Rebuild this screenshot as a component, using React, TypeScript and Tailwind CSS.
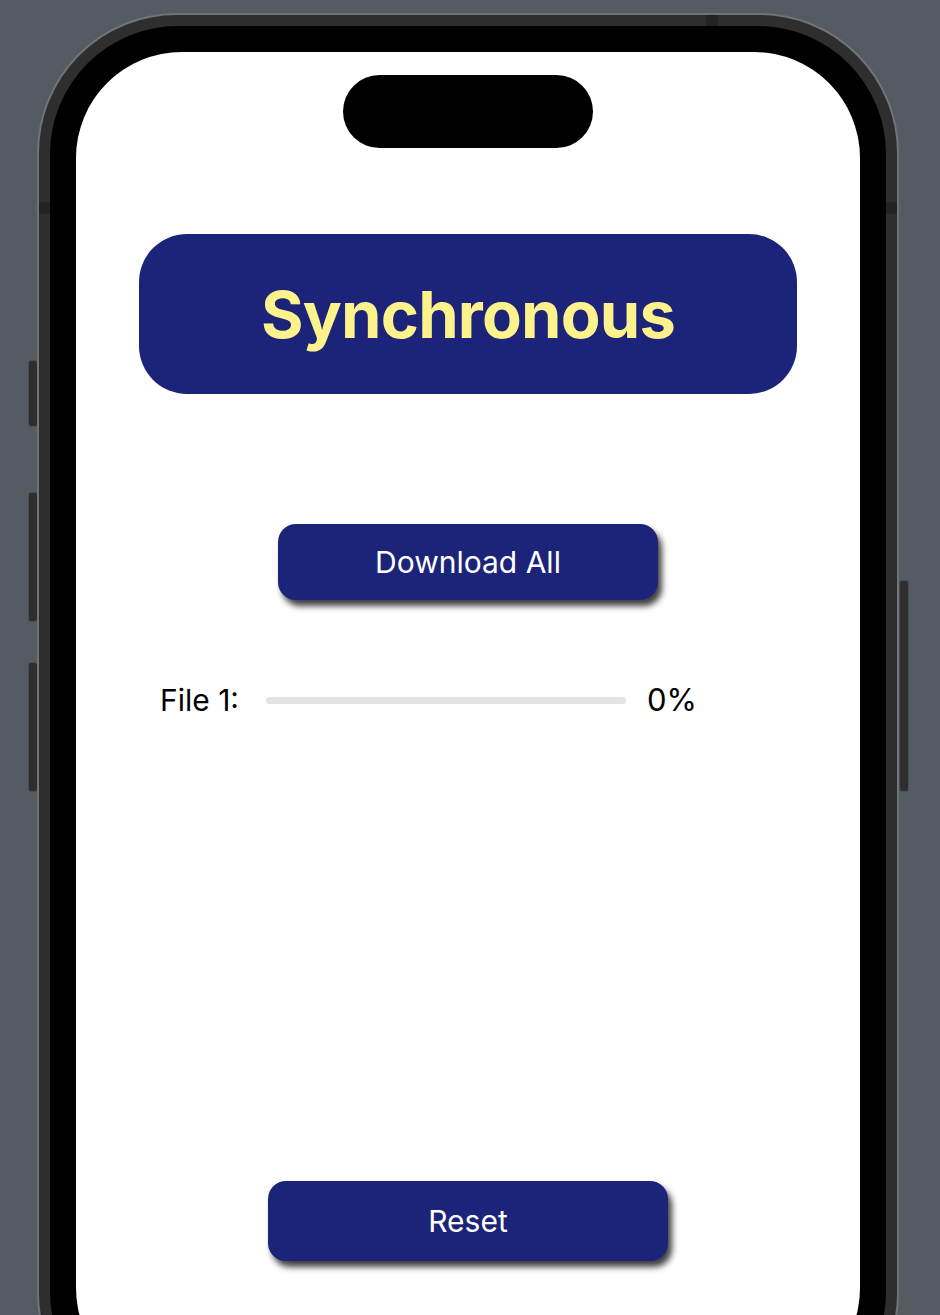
import React from 'react'

// Phone mockup showing a "Synchronous" download demo screen.

const navy = 'bg-[#1c2479]'

function SideButton({ className }: { className: string }) {
  return <div className={`absolute w-[10px] rounded-[3px] bg-[#2e2e2e] border border-[#4a4e55] ${className}`} />
}

export default function App() {
  const progress = 0

  return (
    <div
      className="relative w-[940px] h-[1315px] overflow-hidden bg-[#555b63] pt-[13px]"
      style={{ fontFamily: 'Inter, "Noto Sans", sans-serif' }}
    >
      <div className="relative ml-[37px] w-[862px]">
        {/* hardware buttons */}
        <SideButton className="-left-[9px] top-[347px] h-[67px]" />
        <SideButton className="-left-[9px] top-[479px] h-[130px]" />
        <SideButton className="-left-[9px] top-[649px] h-[130px]" />
        <SideButton className="-right-[10px] top-[567px] h-[212px]" />

        <div className="relative h-[1420px] rounded-[140px] border-2 border-[#707377] bg-[#2e2e2e] p-[11px]">
          {/* antenna lines */}
          <div className="absolute left-0 top-[187px] h-[12px] w-[11px] bg-[#232323]" />
          <div className="absolute right-0 top-[187px] h-[12px] w-[11px] bg-[#232323]" />
          <div className="absolute left-[667px] top-0 h-[11px] w-[12px] bg-[#232323]" />

          <div className="h-full rounded-[128px] bg-black p-[26px]">
            <div className="flex h-full flex-col items-center rounded-[106px] bg-white">
              {/* dynamic island */}
              <div className="mt-[23px] h-[73px] w-[250px] rounded-[37px] bg-black" />

              <div className={`mt-[86px] flex h-[160px] w-[658px] items-center justify-center rounded-[48px] ${navy}`}>
                <h1 className="text-[65px] font-bold leading-none tracking-[-0.8px] text-[#fdf28c]">Synchronous</h1>
              </div>

              <button
                className={`mt-[130px] flex h-[76px] w-[380px] items-center justify-center rounded-[18px] ${navy} text-[30px] text-white shadow-[4px_6px_6px_rgba(0,0,0,0.75)]`}
              >
                Download All
              </button>

              <div className="mt-[82px] flex w-full items-center pl-[84px] text-[30px] leading-[36px] text-black">
                <span className="w-[85px]">File 1:</span>
                <div className="ml-[21px] h-[7px] w-[360px] overflow-hidden rounded-full bg-[#e3e3e3]">
                  <div className="h-full bg-[#1c2479]" style={{ width: `${progress}%` }} />
                </div>
                <span className="ml-[21px] text-[31px]">{progress}%</span>
              </div>

              <button
                className={`mt-[463px] flex h-[80px] w-[400px] items-center justify-center rounded-[18px] ${navy} text-[30px] text-white shadow-[4px_6px_6px_rgba(0,0,0,0.75)]`}
              >
                Reset
              </button>
            </div>
          </div>
        </div>
      </div>
    </div>
  )
}
